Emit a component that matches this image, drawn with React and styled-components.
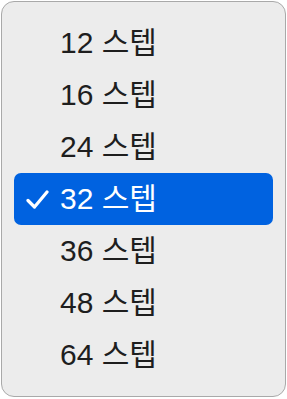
import React from "react";
import styled, { createGlobalStyle } from "styled-components";

const Global = createGlobalStyle`
  html, body { margin: 0; padding: 0; background: #ffffff; }
  body { font-family: "Liberation Sans", "Noto Sans CJK KR", sans-serif; }
`;

const Menu = styled.div`
  box-sizing: border-box;
  margin: 1px;
  width: 285px;
  height: 396px;
  border: 1px solid #a9a9a9;
  border-radius: 13px;
  background: #ececec;
  padding: 15px 12px 0 12px;
  display: flex;
  flex-direction: column;
`;

const Item = styled.div`
  position: relative;
  box-sizing: border-box;
  height: 52px;
  display: flex;
  align-items: center;
  padding: 0 0 6px 46px;
  border-radius: 7px;
  font-size: 30px;
  color: ${(p) => (p.$selected ? "#ffffff" : "#1e1e1e")};
  background: ${(p) => (p.$selected ? "#0062e0" : "transparent")};
`;

const Check = styled.svg`
  position: absolute;
  left: 12px;
  top: 17px;
  width: 23px;
  height: 19px;
`;

const items = [12, 16, 24, 32, 36, 48, 64];

export default function App() {
  return (
    <>
      <Global />
      <Menu>
        {items.map((n) => (
          <Item key={n} $selected={n === 32}>
            {n === 32 && (
              <Check viewBox="0 0 23 19">
                <path d="M2 10.5 L8.5 17 L21 2" fill="none" stroke="#fff" strokeWidth="3.2" strokeLinecap="round" strokeLinejoin="round" />
              </Check>
            )}
            {n} 스텝
          </Item>
        ))}
      </Menu>
    </>
  );
}
